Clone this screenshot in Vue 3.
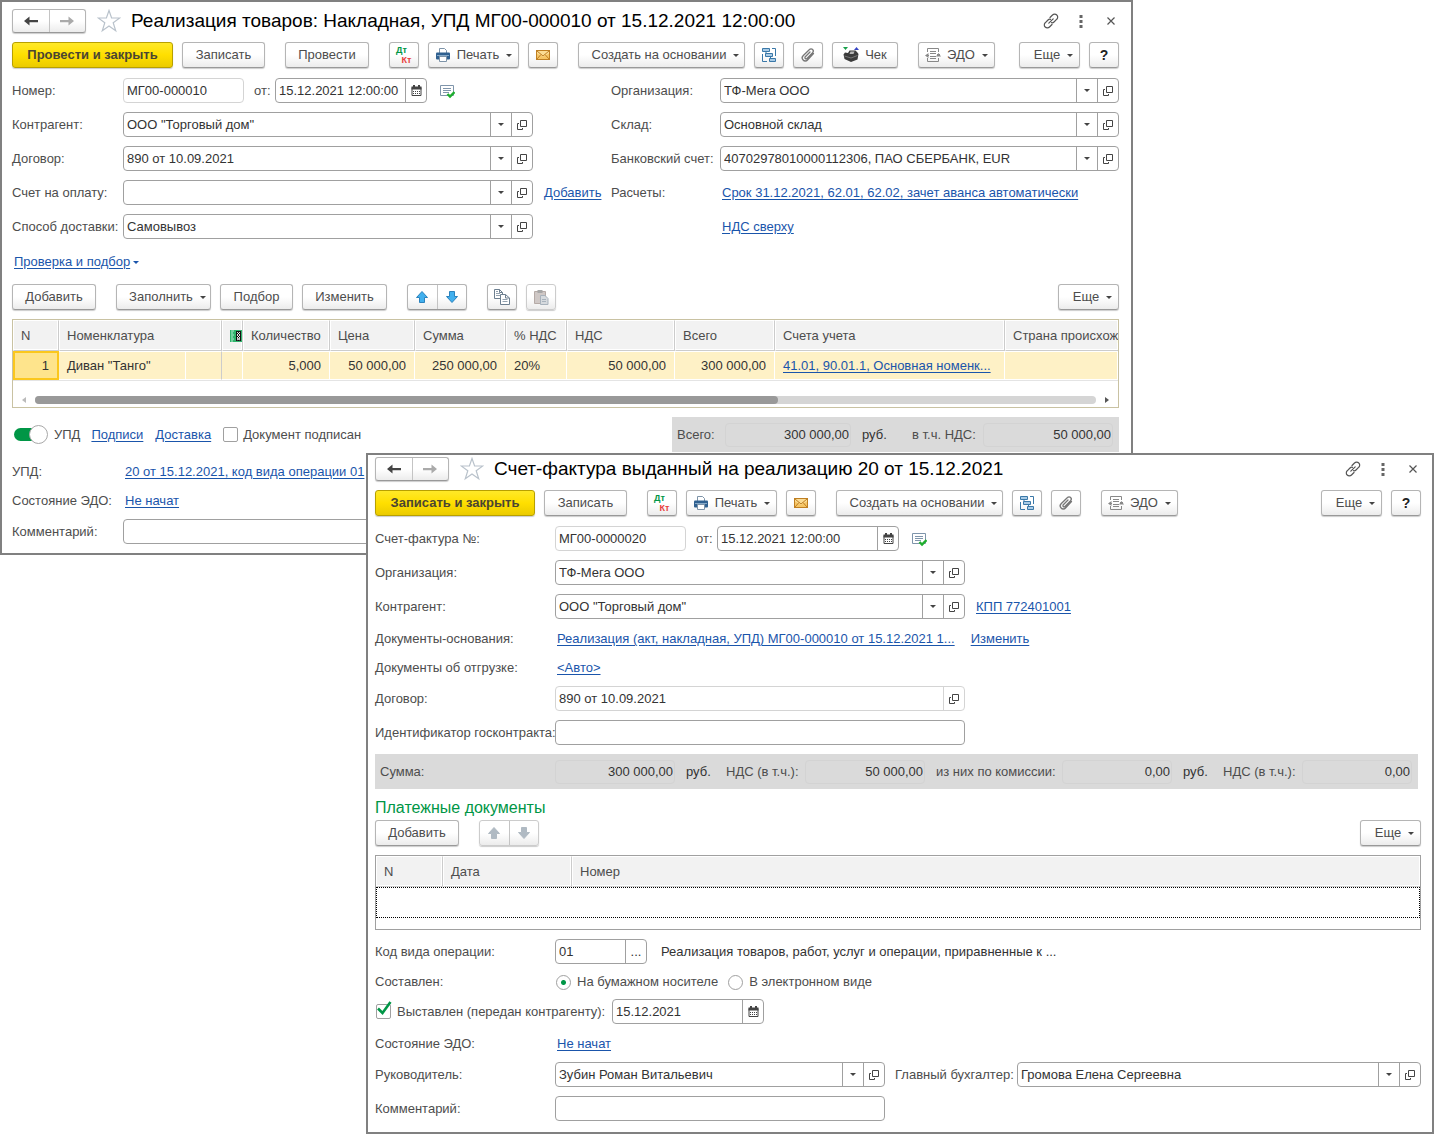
<script setup>
import { ref } from 'vue'

const updEnabled = ref(true)
const signed = ref(false)
const issued = ref(true)
const form = ref('paper')

const leftFields = [
  { id: 'partner', label: 'Контрагент:', value: 'ООО "Торговый дом"' },
  { id: 'contract', label: 'Договор:', value: '890 от 10.09.2021' },
  { id: 'bill', label: 'Счет на оплату:', value: '', link: 'Добавить' },
  { id: 'delivery', label: 'Способ доставки:', value: 'Самовывоз' },
]
const rightFields = [
  { id: 'org', label: 'Организация:', value: 'ТФ-Мега ООО' },
  { id: 'store', label: 'Склад:', value: 'Основной склад' },
  { id: 'bank', label: 'Банковский счет:', value: '40702978010000112306, ПАО СБЕРБАНК, EUR' },
]
const invoiceFields = [
  { id: 'inv-org', label: 'Организация:', value: 'ТФ-Мега ООО' },
  { id: 'inv-partner', label: 'Контрагент:', value: 'ООО "Торговый дом"', link: 'КПП 772401001' },
]
</script>

<template>
  <svg class="sprite" aria-hidden="true">
    <symbol id="i-left" viewBox="0 0 16 16"><path d="M1 8 6.500 3.500V7H15V9.200H6.500V12.500Z" fill="currentColor" /></symbol>
    <symbol id="i-right" viewBox="0 0 16 16"><path d="M15 8 9.500 3.500V7H1V9.200H9.500V12.500Z" fill="currentColor" /></symbol>
    <symbol id="i-star" viewBox="0 0 24 24"><path d="M12 1.500 14.600 9H22.800L16.200 13.800 18.700 21.800 12 17 5.300 21.800 7.800 13.800 1.200 9H9.400Z" fill="#fff" stroke="#b9c2cb" stroke-width="1.200" /></symbol>
    <symbol id="i-link" viewBox="0 0 16 16">
      <g fill="none" stroke="#555" stroke-width="1.200" stroke-linecap="round">
        <path d="M7 4.500 9.500 2a2.900 2.900 0 0 1 4.300 0 2.900 2.900 0 0 1 0 4.200L11 9a2.600 2.600 0 0 1-2.500.700" />
        <path d="M9 11.500 6.500 14a2.900 2.900 0 0 1-4.300 0 2.900 2.900 0 0 1 0-4.200L5 7a2.600 2.600 0 0 1 2.500-.700" />
        <path d="M5.800 10.200 10.200 5.800" />
      </g>
    </symbol>
    <symbol id="i-dots" viewBox="0 0 16 16"><path d="M6.500 2h3v3h-3zM6.500 7h3v3h-3zM6.500 12h3v3h-3z" fill="#666" /></symbol>
    <symbol id="i-close" viewBox="0 0 16 16"><path d="M4.500 4.500l7 7M11.500 4.500l-7 7" stroke="#555" stroke-width="1.200" /></symbol>
    <symbol id="i-print" viewBox="0 0 16 16">
      <path d="M4.500 6V1.500h5l2 2V6" fill="#fff" stroke="#7d93a8" />
      <rect x="1" y="5.500" width="14" height="7" rx="1" fill="#2f6090" />
      <path d="M2 8.500h12" stroke="#86a9c8" />
      <path d="M4.500 9.500h7v5h-7z" fill="#fff" stroke="#7d93a8" />
    </symbol>
    <symbol id="i-mail" viewBox="0 0 16 16">
      <rect x="1.500" y="3.500" width="13" height="9" fill="#f6c565" stroke="#bf7f22" />
      <path d="M2 4h12v2.500L8 10 2 6.500Z" fill="#fbdc94" />
      <path d="M2 4l6 5 6-5M2 12l4-4.500M14 12l-4-4.500" fill="none" stroke="#bf7f22" />
    </symbol>
    <symbol id="i-tree" viewBox="0 0 16 16">
      <g fill="#a9cbe6" stroke="#3a78a8">
        <path d="M1.500 1.500h7v3h-7zM4.500 6.500h7v3h-7zM8.500 11.500h6v3h-6z" />
        <path d="M11 1.500h3.500V9M1.500 7v7.500H6M5 4.500v2M9.500 9.500v2" fill="none" />
      </g>
    </symbol>
    <symbol id="i-clip" viewBox="0 0 16 16">
      <path d="M13.500 6.500 7.500 13a2.900 2.900 0 0 1-4.400 0 3 3 0 0 1 0-4.200L9.500 2.500a2.100 2.100 0 0 1 3.100 0 2.200 2.200 0 0 1 0 3.100L7 11.500a1.100 1.100 0 0 1-1.700 0 1.200 1.200 0 0 1 0-1.700L10 5" fill="none" stroke="#777" stroke-width="1.300" stroke-linecap="round" />
    </symbol>
    <symbol id="i-cash" viewBox="0 0 16 16">
      <path d="M0 0h5L2.500 3z" fill="#17a04a" />
      <path d="M11 3h5l-2.500-3z" fill="#3745c4" />
      <path d="M.500 7.500 2 5.500 5 6 6.500 3.500h6L14 5l1.500 2-1 5.500-6.500 2.500-6.500-3Z" fill="#3b3b3b" />
      <path d="M7.500 4.500h4l-1 2.500H6.500Z" fill="#b5b5b5" />
      <path d="M1.500 9 8 11l6.500-2.500" stroke="#777" fill="none" />
    </symbol>
    <symbol id="i-edo" viewBox="0 0 16 16">
      <g fill="none" stroke="#888">
        <path d="M2.500 5V1.500h11V5M13.500 11v3.500h-11V11" />
        <path d="M5 4.500h6M5 6.500h6M5 9.500h6M5 11.500h6" />
        <path d="M1 8.500h3M12 7.500h3" />
      </g>
      <path d="M3.500 6v5L0 8.500ZM11 9.500 13.500 6 16 9.500Z" fill="#888" />
    </symbol>
    <symbol id="i-up" viewBox="0 0 16 16"><path d="M8 2.500 13.500 8.500H10.500V13.500H5.500V8.500H2.500Z" fill="currentColor" stroke="var(--edge)" stroke-width="1" /></symbol>
    <symbol id="i-down" viewBox="0 0 16 16"><path d="M8 13.500 13.500 7.500H10.500V2.500H5.500V7.500H2.500Z" fill="currentColor" stroke="var(--edge)" stroke-width="1" /></symbol>
    <symbol id="i-copy" viewBox="0 0 16 16">
      <g fill="#fff" stroke="#6d7f90">
        <path d="M.500.500h5l3 3v6h-8zM5.500.500v3h3" />
        <path d="M6.500 5.500h5l4 3.500v6.500h-9zM11.500 5.500v3.500h4" />
        <path d="M2 4.500h4M2 6.500h4M8.500 10.500h5M8.500 12.500h5M2 2.500h2" fill="none" stroke="#93a2b0" />
      </g>
    </symbol>
    <symbol id="i-paste" viewBox="0 0 16 16">
      <path d="M1.500 2.500h11v12h-11z" fill="#cfc8c6" stroke="#b5aaa6" />
      <path d="M4.500 1h5v3h-5z" fill="#a7a7a7" />
      <path d="M7.500 6.500h4.500l3 3v6H7.500z" fill="#d6dade" stroke="#a8b2bc" />
      <path d="M9 10.500h4M9 12.500h4" stroke="#a8b2bc" />
    </symbol>
    <symbol id="i-cal" viewBox="0 0 16 16">
      <path d="M4 4.500h9v8H4z" fill="#fff" stroke="#444" />
      <path d="M3.500 3.500h10v3h-10zM5 2h2v2H5zM10 2h2v2h-2z" fill="#444" />
      <path d="M5 8.500h7M5 10.500h7" stroke="#444" stroke-dasharray="1 1" />
    </symbol>
    <symbol id="i-posted" viewBox="0 0 16 16">
      <path d="M1.500 2.500h13v10h-13z" fill="#fff" stroke="#7f95ab" />
      <path d="M4 5.500h8M4 7.500h8M4 9.500h6" stroke="#7f95ab" />
      <path d="M8.500 11l2.500 2.500L15.500 9" fill="none" stroke="#1fae2e" stroke-width="2.400" />
    </symbol>
    <symbol id="i-open" viewBox="0 0 16 16"><path d="M6.500 3.500h6v6h-6zM5 6.500H3.500v6h5V11" fill="none" stroke="#444" /></symbol>
    <symbol id="i-check" viewBox="0 0 16 16"><path d="M2 7.500 6.500 12 14.500 1" fill="none" stroke="#009646" stroke-width="2.600" /></symbol>
    <symbol id="i-mark" viewBox="0 0 13 12">
      <path d="M0 0h13v12H0z" fill="#2fb36c" />
      <path d="M1 1h3M1 3h2M1 5h3M1 7h2M1 9h3M1 11h2" stroke="#b8ebd0" />
      <path d="M6 1h5v10H6z" fill="#111" />
      <path d="M7 2l3 3-3 3 3 2M10 2 7 5l3 3-3 2" stroke="#fff" fill="none" stroke-width=".900" />
    </symbol>
  </svg>

  <main class="desktop">
    <section class="win sale">
      <header class="titlebar">
        <div class="pair nav">
          <button type="button" aria-label="Назад"><svg><use href="#i-left" /></svg></button>
          <button type="button" class="dim" aria-label="Вперед"><svg><use href="#i-right" /></svg></button>
        </div>
        <button type="button" class="bare star" aria-label="В избранное"><svg><use href="#i-star" /></svg></button>
        <h1>Реализация товаров: Накладная, УПД МГ00-000010 от 15.12.2021 12:00:00</h1>
        <div class="tools">
          <button type="button" class="bare" aria-label="Ссылка"><svg><use href="#i-link" /></svg></button>
          <button type="button" class="bare" aria-label="Меню"><svg><use href="#i-dots" /></svg></button>
          <button type="button" class="bare" aria-label="Закрыть"><svg><use href="#i-close" /></svg></button>
        </div>
      </header>

      <div class="bar commands">
        <div class="group">
          <button type="button" class="btn primary">Провести и закрыть</button>
          <button type="button" class="btn w83">Записать</button>
        </div>
        <button type="button" class="btn w84">Провести</button>
        <div class="group">
          <button type="button" class="btn icon dtkt"><span>Дт</span><span>Кт</span></button>
          <button type="button" class="btn w91"><svg><use href="#i-print" /></svg>Печать<i class="caret"></i></button>
          <button type="button" class="btn icon" aria-label="Почта"><svg><use href="#i-mail" /></svg></button>
        </div>
        <div class="group">
          <button type="button" class="btn create">Создать на основании<i class="caret"></i></button>
          <button type="button" class="btn icon" aria-label="Структура"><svg><use href="#i-tree" /></svg></button>
          <button type="button" class="btn icon" aria-label="Файлы"><svg><use href="#i-clip" /></svg></button>
          <button type="button" class="btn w66"><svg><use href="#i-cash" /></svg>Чек</button>
        </div>
        <button type="button" class="btn w77"><svg><use href="#i-edo" /></svg>ЭДО<i class="caret"></i></button>
        <div class="group end">
          <button type="button" class="btn more">Еще<i class="caret"></i></button>
          <button type="button" class="btn icon help">?</button>
        </div>
      </div>

      <div class="columns">
        <div class="stack">
          <div class="row">
            <label class="lbl" for="num">Номер:</label>
            <div class="field locked number"><input id="num" value="МГ00-000010" readonly></div>
            <label class="from" for="date">от:</label>
            <div class="field w152"><input id="date" value="15.12.2021 12:00:00"><button type="button" aria-label="Календарь"><svg><use href="#i-cal" /></svg></button></div>
            <svg class="posted"><use href="#i-posted" /></svg>
          </div>
          <div v-for="f in leftFields" :key="f.id" class="row">
            <label class="lbl" :for="f.id">{{ f.label }}</label>
            <div class="field grow">
              <input :id="f.id" :value="f.value">
              <button type="button" aria-label="Выбрать"><i class="caret"></i></button>
              <button type="button" aria-label="Открыть"><svg><use href="#i-open" /></svg></button>
            </div>
            <div class="slot"><a v-if="f.link" href="#">{{ f.link }}</a></div>
          </div>
        </div>
        <div class="stack right">
          <div v-for="f in rightFields" :key="f.id" class="row">
            <label class="lbl" :for="f.id">{{ f.label }}</label>
            <div class="field grow">
              <input :id="f.id" :value="f.value">
              <button type="button" aria-label="Выбрать"><i class="caret"></i></button>
              <button type="button" aria-label="Открыть"><svg><use href="#i-open" /></svg></button>
            </div>
          </div>
          <div class="row"><span class="lbl">Расчеты:</span><a class="inset" href="#">Срок 31.12.2021, 62.01, 62.02, зачет аванса автоматически</a></div>
          <div class="row"><span class="lbl"></span><a class="inset" href="#">НДС сверху</a></div>
        </div>
      </div>

      <div class="picker"><a class="inset" href="#">Проверка и подбор</a><i class="caret"></i></div>

      <div class="bar">
        <button type="button" class="btn w84">Добавить</button>
        <div class="group">
          <button type="button" class="btn fill">Заполнить<i class="caret"></i></button>
          <button type="button" class="btn w73">Подбор</button>
          <button type="button" class="btn w85">Изменить</button>
        </div>
        <div class="pair move">
          <button type="button" aria-label="Вверх"><svg><use href="#i-up" /></svg></button>
          <button type="button" aria-label="Вниз"><svg><use href="#i-down" /></svg></button>
        </div>
        <div class="group">
          <button type="button" class="btn icon" aria-label="Копировать"><svg><use href="#i-copy" /></svg></button>
          <button type="button" class="btn icon off" aria-label="Вставить"><svg><use href="#i-paste" /></svg></button>
        </div>
        <div class="group end"><button type="button" class="btn more">Еще<i class="caret"></i></button></div>
      </div>

      <div class="grid goods">
        <table>
          <colgroup>
            <col class="c46"><col class="c127"><col class="c36"><col class="c21"><col class="c87"><col class="c85">
            <col class="c91"><col class="c61"><col class="c108"><col class="c100"><col class="c230"><col>
          </colgroup>
          <thead>
            <tr>
              <th>N</th><th colspan="2">Номенклатура</th>
              <th class="mark"><svg><use href="#i-mark" /></svg></th>
              <th>Количество</th><th>Цена</th><th>Сумма</th><th>% НДС</th><th>НДС</th><th>Всего</th><th>Счета учета</th><th>Страна происхождения</th>
            </tr>
          </thead>
          <tbody>
            <tr>
              <td class="num current">1</td><td>Диван "Танго"</td><td class="edge"></td><td></td>
              <td class="num">5,000</td><td class="num">50 000,00</td><td class="num">250 000,00</td><td>20%</td>
              <td class="num">50 000,00</td><td class="num">300 000,00</td><td><a href="#">41.01, 90.01.1, Основная номенк...</a></td><td></td>
            </tr>
          </tbody>
        </table>
        <div class="scroll"><i class="arrow back"></i><div class="track"><div class="thumb"></div></div><i class="arrow"></i></div>
      </div>

      <div class="foot">
        <label class="toggle"><input v-model="updEnabled" type="checkbox"><span>УПД</span></label>
        <a href="#">Подписи</a>
        <a href="#">Доставка</a>
        <label class="check"><input v-model="signed" type="checkbox"><span>Документ подписан</span></label>
        <div class="totals">
          <label for="t-all">Всего:</label><input id="t-all" class="t-all" value="300 000,00" readonly>
          <span class="cur">руб.</span>
          <label class="t-gap" for="t-vat">в т.ч. НДС:</label><input id="t-vat" class="t-vat" value="50 000,00" readonly>
        </div>
      </div>

      <div class="row link-row upd"><span class="lbl">УПД:</span><a class="inset" href="#">20 от 15.12.2021, код вида операции 01</a></div>
      <div class="row link-row"><span class="lbl">Состояние ЭДО:</span><a class="inset" href="#">Не начат</a></div>
      <div class="row note"><label class="lbl" for="note">Комментарий:</label><div class="field grow"><input id="note"></div></div>
    </section>

    <section class="win invoice">
      <header class="titlebar">
        <div class="pair nav">
          <button type="button" aria-label="Назад"><svg><use href="#i-left" /></svg></button>
          <button type="button" class="dim" aria-label="Вперед"><svg><use href="#i-right" /></svg></button>
        </div>
        <button type="button" class="bare star" aria-label="В избранное"><svg><use href="#i-star" /></svg></button>
        <h1>Счет-фактура выданный на реализацию 20 от 15.12.2021</h1>
        <div class="tools">
          <button type="button" class="bare" aria-label="Ссылка"><svg><use href="#i-link" /></svg></button>
          <button type="button" class="bare" aria-label="Меню"><svg><use href="#i-dots" /></svg></button>
          <button type="button" class="bare" aria-label="Закрыть"><svg><use href="#i-close" /></svg></button>
        </div>
      </header>

      <div class="bar commands">
        <div class="group">
          <button type="button" class="btn primary">Записать и закрыть</button>
          <button type="button" class="btn w83">Записать</button>
        </div>
        <div class="group">
          <button type="button" class="btn icon dtkt"><span>Дт</span><span>Кт</span></button>
          <button type="button" class="btn w91"><svg><use href="#i-print" /></svg>Печать<i class="caret"></i></button>
          <button type="button" class="btn icon" aria-label="Почта"><svg><use href="#i-mail" /></svg></button>
        </div>
        <div class="group">
          <button type="button" class="btn create">Создать на основании<i class="caret"></i></button>
          <button type="button" class="btn icon" aria-label="Структура"><svg><use href="#i-tree" /></svg></button>
          <button type="button" class="btn icon" aria-label="Файлы"><svg><use href="#i-clip" /></svg></button>
        </div>
        <button type="button" class="btn w77"><svg><use href="#i-edo" /></svg>ЭДО<i class="caret"></i></button>
        <div class="group end">
          <button type="button" class="btn more">Еще<i class="caret"></i></button>
          <button type="button" class="btn icon help">?</button>
        </div>
      </div>

      <div class="stack">
        <div class="row">
          <label class="lbl" for="inv-num">Счет-фактура №:</label>
          <div class="field locked number"><input id="inv-num" value="МГ00-0000020" readonly></div>
          <label class="from" for="inv-date">от:</label>
          <div class="field w182"><input id="inv-date" value="15.12.2021 12:00:00"><button type="button" aria-label="Календарь"><svg><use href="#i-cal" /></svg></button></div>
          <svg class="posted"><use href="#i-posted" /></svg>
        </div>
        <div v-for="f in invoiceFields" :key="f.id" class="row">
          <label class="lbl" :for="f.id">{{ f.label }}</label>
          <div class="field w410">
            <input :id="f.id" :value="f.value">
            <button type="button" aria-label="Выбрать"><i class="caret"></i></button>
            <button type="button" aria-label="Открыть"><svg><use href="#i-open" /></svg></button>
          </div>
          <div class="slot"><a v-if="f.link" href="#">{{ f.link }}</a></div>
        </div>
      </div>
      <div class="row link-row base"><span class="lbl">Документы-основания:</span><a class="inset" href="#">Реализация (акт, накладная, УПД) МГ00-000010 от 15.12.2021 1...</a><a class="change" href="#">Изменить</a></div>
      <div class="row link-row"><span class="lbl">Документы об отгрузке:</span><a class="inset" href="#">&lt;Авто&gt;</a></div>
      <div class="stack deal">
        <div class="row">
          <label class="lbl" for="inv-contract">Договор:</label>
          <div class="field locked w410"><input id="inv-contract" value="890 от 10.09.2021" readonly><button type="button" aria-label="Открыть"><svg><use href="#i-open" /></svg></button></div>
        </div>
        <div class="row"><label class="lbl" for="gov">Идентификатор госконтракта:</label><div class="field w410"><input id="gov"></div></div>
      </div>

      <div class="totals">
        <label class="s-sum" for="s-sum">Сумма:</label><input id="s-sum" class="w120" value="300 000,00" readonly>
        <span class="cur">руб.</span>
        <label class="s-vat" for="s-vat">НДС (в т.ч.):</label><input id="s-vat" class="w120" value="50 000,00" readonly>
        <label class="s-com" for="s-com">из них по комиссии:</label><input id="s-com" class="w110" value="0,00" readonly>
        <span class="cur">руб.</span>
        <label class="s-vat" for="s-cvat">НДС (в т.ч.):</label><input id="s-cvat" class="w110" value="0,00" readonly>
      </div>

      <h2>Платежные документы</h2>
      <div class="bar">
        <button type="button" class="btn w84">Добавить</button>
        <div class="pair move off">
          <button type="button" aria-label="Вверх"><svg><use href="#i-up" /></svg></button>
          <button type="button" aria-label="Вниз"><svg><use href="#i-down" /></svg></button>
        </div>
        <div class="group end"><button type="button" class="btn more">Еще<i class="caret"></i></button></div>
      </div>

      <div class="grid payments">
        <table>
          <colgroup><col class="c67"><col class="c129"><col></colgroup>
          <thead><tr><th>N</th><th>Дата</th><th>Номер</th></tr></thead>
          <tbody><tr><td colspan="3"></td></tr></tbody>
        </table>
      </div>

      <div class="row">
        <label class="lbl" for="code">Код вида операции:</label>
        <div class="field w92"><input id="code" value="01"><button type="button">...</button></div>
        <span class="hint">Реализация товаров, работ, услуг и операции, приравненные к ...</span>
      </div>
      <div class="row radios" role="radiogroup" aria-label="Составлен">
        <span class="lbl">Составлен:</span>
        <label class="radio"><input v-model="form" type="radio" name="form" value="paper"><span>На бумажном носителе</span></label>
        <label class="radio"><input v-model="form" type="radio" name="form" value="digital"><span>В электронном виде</span></label>
      </div>
      <div class="row">
        <label class="check issued"><span class="tick"><input v-model="issued" type="checkbox"><svg v-if="issued"><use href="#i-check" /></svg></span><span>Выставлен (передан контрагенту):</span></label>
        <div class="field w152"><input aria-label="Дата выставления" value="15.12.2021"><button type="button" aria-label="Календарь"><svg><use href="#i-cal" /></svg></button></div>
      </div>
      <div class="row link-row state"><span class="lbl">Состояние ЭДО:</span><a class="inset" href="#">Не начат</a></div>
      <div class="stack">
        <div class="row">
          <label class="lbl" for="head">Руководитель:</label>
          <div class="field w330"><input id="head" value="Зубин Роман Витальевич"><button type="button" aria-label="Выбрать"><i class="caret"></i></button><button type="button" aria-label="Открыть"><svg><use href="#i-open" /></svg></button></div>
          <label class="chief" for="chief">Главный бухгалтер:</label>
          <div class="field grow"><input id="chief" value="Громова Елена Сергеевна"><button type="button" aria-label="Выбрать"><i class="caret"></i></button><button type="button" aria-label="Открыть"><svg><use href="#i-open" /></svg></button></div>
        </div>
        <div class="row"><label class="lbl" for="inv-note">Комментарий:</label><div class="field w330"><input id="inv-note"></div></div>
      </div>
    </section>
  </main>
</template>

<style>
body { background: #fff; }
</style>

<style scoped>
.sprite { position: absolute; width: 0; height: 0; }
.desktop {
  display: grid;
  font: 13px/16px "Liberation Sans", Arial, sans-serif;
  color: #4d4d4d;
  white-space: nowrap;
}
.desktop *, .desktop *::before { box-sizing: border-box; }
.win {
  grid-area: 1 / 1;
  align-self: start;
  min-width: 0;
  background: #fff;
  border: 2px solid #808080;
}
.sale { margin-right: 305px; padding: 6px 12px 9px 10px; --label: 111px; }
.invoice { margin: 453px 4px 4px 366px; padding: 1px 11px 11px 7px; --label: 180px; }

button, input { font: inherit; color: inherit; margin: 0; padding: 0; }
svg { width: 16px; height: 16px; flex: none; display: block; }
a { color: #1a55ab; text-decoration: underline; text-underline-offset: 2px; }
h1 { margin: 0; font-size: 19px; line-height: 24px; font-weight: 400; color: #000; }
h2 { margin: 9px 0 2px; font-size: 16px; line-height: 20px; font-weight: 400; color: #009646; }

.titlebar { display: flex; align-items: center; height: 25px; }
.bare { border: 0; background: none; display: flex; align-items: center; justify-content: center; }
.star { margin: 0 10px 0 11px; }
.star svg { width: 24px; height: 24px; }
.tools { margin-left: auto; display: flex; gap: 14px; }

.pair { display: flex; border: 1px solid #b5b5b5; border-bottom-color: #999; border-radius: 3px; box-shadow: 0 1px 1px #ccc; background: linear-gradient(#fff 50%, #ececec); }
.pair button { flex: 1; border: 0; background: none; display: flex; align-items: center; justify-content: center; }
.pair button + button { border-left: 1px solid #c4c4c4; }
.nav { width: 74px; height: 24px; color: #444; }
.nav .dim { color: #aaa; }
.move { width: 60px; height: 26px; color: #41b0ee; --edge: #2b82bd; }
.move.off { color: #b0bac3; --edge: #b0bac3; border-color: #ccc; }

.bar { display: flex; gap: 20px; height: 26px; }
.commands { margin: 9px 0 10px; }
.group { display: flex; gap: 9px; }
.end { margin-left: auto; }
.btn {
  height: 26px;
  display: flex;
  align-items: center;
  justify-content: center;
  border: 1px solid #b5b5b5;
  border-bottom-color: #999;
  border-radius: 3px;
  box-shadow: 0 1px 1px #ccc;
  background: linear-gradient(#fff 50%, #ececec);
  white-space: nowrap;
}
.btn svg { margin-right: 6px; }
.btn .caret { margin-left: 7px; }
.caret { width: 0; height: 0; flex: none; border: 3px solid transparent; border-top-color: #444; border-bottom: 0; }
.primary { width: 161px; font-weight: 700; color: #4a4532; border-color: #b8a000; background: linear-gradient(#ffe928, #ffdf00 50%, #ebcb00); }
.invoice .primary { width: 160px; }
.icon { width: 30px; }
.icon svg { margin: 0; }
.off.btn { border-color: #ccc; }
.dtkt { flex-direction: column; font-size: 9px; line-height: 10px; font-weight: 700; color: #009646; }
.dtkt span { padding-right: 5px; }
.dtkt span + span { padding: 0 0 0 5px; color: #e8403c; }
.help { font-weight: 700; font-size: 14px; color: #222; }
.w66 { width: 66px; }
.w73 { width: 73px; }
.w77 { width: 77px; }
.w83 { width: 83px; }
.w84 { width: 84px; }
.w85 { width: 85px; }
.w91 { width: 91px; }
.fill { width: 95px; padding-left: 8px; }
.more { width: 61px; padding-left: 8px; }
.create { width: 167px; padding-left: 8px; }

.columns { display: grid; grid-template-columns: minmax(0, 599fr) minmax(0, 508fr); }
.stack { display: flex; flex-direction: column; gap: 9px; }
.right { --label: 109px; }
.row { display: flex; align-items: center; height: 25px; }
.lbl { flex: none; width: var(--label); }
.inset { margin-left: 2px; }
.slot { width: 78px; padding-left: 11px; }
.field { display: flex; flex: none; height: 25px; border: 1px solid #a0a0a0; border-radius: 4px; background: #fff; color: #333; overflow: hidden; }
.field.grow { flex: 1; min-width: 0; }
.field input { flex: 1; min-width: 0; width: 0; border: 0; padding: 0 3px; background: none; outline: 0; }
.field button { flex: none; width: 21px; border: 0; border-left: 1px solid #a0a0a0; background: none; display: flex; align-items: center; justify-content: center; }
.locked { border-color: #d4d4d4; }
.locked button { border-color: #d4d4d4; }
.number { width: 121px; }
.invoice .number { width: 131px; }
.from { width: 31px; padding-left: 10px; }
.w92 { width: 92px; }
.w152 { width: 152px; }
.w182 { width: 182px; }
.w330 { width: 330px; }
.w410 { width: 410px; }
.posted { margin-left: 12px; }

.picker { display: flex; align-items: center; gap: 3px; height: 16px; margin: 15px 0 14px; }
.picker .caret { border-top-color: #1a55ab; }

.grid { margin-top: 9px; border: 1px solid #c9c2a2; overflow: hidden; }
table { width: 100%; table-layout: fixed; border-collapse: separate; border-spacing: 0; }
.c21 { width: 21px; }
.c36 { width: 36px; }
.c46 { width: 46px; }
.c61 { width: 61px; }
.c67 { width: 67px; }
.c85 { width: 85px; }
.c87 { width: 87px; }
.c91 { width: 91px; }
.c100 { width: 100px; }
.c108 { width: 108px; }
.c127 { width: 127px; }
.c129 { width: 129px; }
.c230 { width: 230px; }
th, td { padding: 0 8px; overflow: hidden; text-align: left; font-weight: 400; }
th { height: 31px; background: #f2f2f2; border: 1px solid #fff; border-right-color: #ccc; border-bottom-color: #ccc; box-shadow: inset -1px -1px #fff; padding: 0 0 0 7px; }
th:last-child { border-right: 0; }
.mark svg { width: 13px; height: 12px; }
.goods td { height: 29px; background: #fef1c6; color: #333; border: solid #fff; border-width: 1px 1px 1px 0; box-shadow: 0 1px #e4e4e4; }
.goods tbody .num { text-align: right; }
.goods .edge { border-right-color: #ccc; }
.goods .current { background: #fee48c; border: 2px solid #fbc71d; }
.scroll { display: flex; align-items: center; gap: 9px; height: 8px; margin: 16px 9px 3px; }
.track { flex: 1; height: 8px; border-radius: 4px; background: #d5d5d5; }
.thumb { width: 70%; height: 8px; border-radius: 4px; background: #999; }
.arrow { border: 3px solid transparent; border-left: 4px solid #555; border-right: 0; }
.arrow.back { border-left: 0; border-right: 4px solid #bbb; }

.foot { display: flex; align-items: center; height: 35px; margin-top: 9px; }
.foot a { margin-right: 12px; }
.toggle { display: flex; align-items: center; gap: 14px; margin: 0 11px 0 2px; }
.toggle input { appearance: none; width: 26px; height: 13px; display: flex; align-items: center; background: #bbb; border-radius: 7px; }
.toggle input:checked { background: #009646; }
.toggle input::before { content: ""; flex: none; width: 19px; height: 19px; border: 1px solid #a8a8a8; border-radius: 50%; background: #fff; }
.toggle input:checked::before { margin-left: 15px; }
.check { display: flex; align-items: center; gap: 6px; }
.foot .check { gap: 5px; }
.check input { appearance: none; display: block; width: 15px; height: 15px; border: 1px solid #a0a0a0; border-radius: 2px; background: #fff; }
.tick { display: grid; }
.tick > * { grid-area: 1 / 1; }
.tick svg { margin-top: -3px; }
.issued { width: 237px; padding-left: 1px; }
.issued .tick { width: 15px; }

.totals { display: flex; align-items: center; height: 35px; background: #dadada; }
.totals input { height: 24px; border: 1px solid #d3d3d3; border-radius: 4px; padding: 0 1px; background: none; color: #333; text-align: right; outline: 0; }
.foot .totals { margin-left: auto; width: 447px; padding: 0 6px 0 5px; }
.foot .totals .t-all { flex: 1; min-width: 0; margin-left: 10px; }
.cur { flex: none; width: 51px; padding-left: 11px; color: #333; }
.t-gap { flex: none; width: 81px; padding-left: 10px; }
.t-vat { flex: none; width: 130px; }
.invoice .totals { margin: 9px 3px 0 0; }
.s-sum { width: 180px; padding-left: 5px; }
.s-vat { width: 79px; }
.s-com { width: 137px; padding-left: 11px; }
.w110 { width: 110px; }
.w120 { width: 120px; }

.link-row { height: 16px; margin-bottom: 13px; }
.upd { margin-top: 12px; }
.note { margin-top: -3px; }
.base { margin-top: 12px; }
.change { margin-left: 16px; }
.deal { margin-top: -3px; }

.payments { border-color: #a0a0a0; margin-bottom: 9px; padding-bottom: 11px; }
.payments td { height: 31px; border: 1px dotted #000; }
.hint { margin-left: 14px; color: #333; }
.radios { height: 16px; margin: 10px 0 9px; }
.radio { display: flex; align-items: center; gap: 6px; margin: 0 9px 0 1px; }
.radio input { appearance: none; width: 15px; height: 15px; border: 1px solid #a0a0a0; border-radius: 50%; background: #fff; }
.radio input:checked { background: radial-gradient(circle, #009646 2px, #fff 3px); }
.state { margin: 12px 0 10px; }
.chief { width: 132px; padding-left: 10px; flex: none; }
</style>
